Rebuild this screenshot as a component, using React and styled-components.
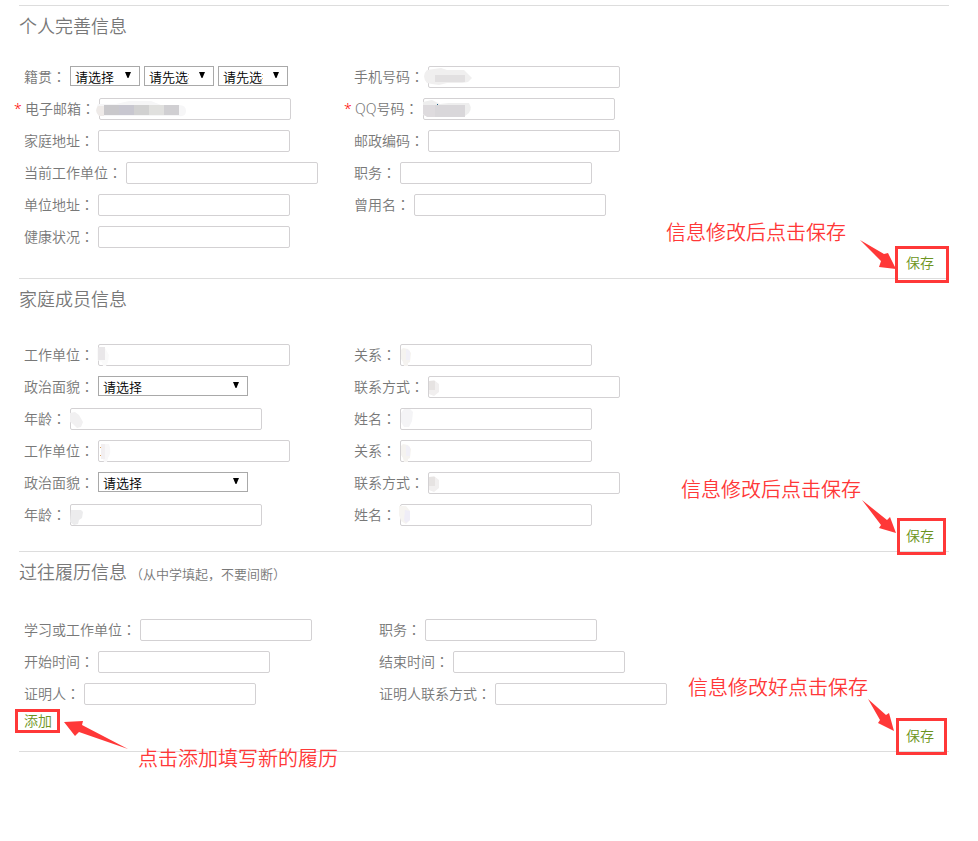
import React, { useId } from "react";
import styled, { createGlobalStyle } from "styled-components";

const GlobalStyle = createGlobalStyle`
  * { box-sizing: border-box; }
  body {
    margin: 0;
    background: #fff;
    color: #787878;
    font-family: "Noto Sans", "Noto Sans CJK SC", sans-serif;
    font-size: 14px;
    font-weight: 350;
    line-height: 20px;
  }
`;

const Page = styled.main`
  padding: 5px 29px 89px 19px;
`;

const Section = styled.section`
  position: relative;
  border-top: 1px solid #ddd;
  &:last-child { border-bottom: 1px solid #ddd; }
`;

const Header = styled.header`
  display: flex;
  align-items: baseline;
  gap: 3px;
  height: ${(p) => p.$height}px;
  padding-top: 7px;
  white-space: nowrap;
`;

const Title = styled.h2`
  margin: 0;
  font-size: 18px;
  font-weight: 350;
  line-height: 26px;
`;

const Hint = styled.small`
  font-size: 13px;
`;

/* The traditional face centres full-width punctuation in its cell. */
const Punct = styled.span`
  font-family: "Noto Sans CJK TC", sans-serif;
`;

const Fields = styled.div`
  display: grid;
  grid-template-columns: ${(p) => p.$first}px minmax(0, 1fr);
  grid-auto-rows: 32px;
  padding-left: 5px;
`;

const FieldRow = styled.div`
  grid-column: ${(p) => p.$column};
  display: flex;
  align-items: center;
  gap: 4px;
`;

const Label = styled.label`
  padding-bottom: 2px;
  white-space: nowrap;
`;

const Star = styled.span`
  width: 7px;
  margin-left: -10px;
  color: #f00;
`;

const Control = styled.span`
  position: relative;
  display: flex;
`;

const TextInput = styled.input`
  width: ${(p) => p.$width}px;
  height: 22px;
  padding: 0 4px;
  border: 1px solid #d3d1d3;
  border-radius: 2px;
  background: #fff;
  font: inherit;
`;

const Picker = styled.select`
  appearance: none;
  width: ${(p) => p.$width}px;
  height: 20px;
  margin-bottom: 2px;
  padding: 2px 24px 0 4px;
  border: 1px solid #a9a9a9;
  border-radius: 0;
  background: #fff;
  color: #000;
  font: inherit;
  font-size: 13px;
  line-height: 17px;
`;

const Caret = styled.svg`
  position: absolute;
  top: 6px;
  right: 9px;
  width: 6px;
  height: 6px;
  pointer-events: none;
`;

const Blot = styled.svg`
  position: absolute;
  top: 0;
  left: -4px;
  width: 96px;
  height: 22px;
  pointer-events: none;
`;

const Footer = styled.footer`
  display: flex;
  justify-content: flex-end;
  margin-top: ${(p) => p.$lift ? "-5px" : "0"};
  padding: 0 15px 5px 0;
`;

const AddRow = styled.div`
  display: flex;
  padding: 1px 0 0 5px;
`;

const TextButton = styled.button`
  padding: 0;
  border: 0;
  background: none;
  color: #6c9420;
  font: inherit;
  cursor: pointer;
`;

/* Callouts float over the form. */
const Frame = styled.span`
  position: absolute;
  z-index: 1;
  top: ${(p) => p.$top}px;
  ${(p) => p.$side}: ${(p) => p.$inset}px;
  width: ${(p) => p.$width}px;
  height: ${(p) => p.$height}px;
  border: 3px solid #ff3838;
  pointer-events: none;
`;

const Note = styled.span`
  position: absolute;
  z-index: 1;
  top: ${(p) => p.$top}px;
  ${(p) => p.$side}: ${(p) => p.$inset}px;
  color: #ff3838;
  font-size: 20px;
  line-height: 28px;
  white-space: nowrap;
  pointer-events: none;
`;

const Arrow = styled.svg`
  position: absolute;
  z-index: 1;
  top: ${(p) => p.$top}px;
  ${(p) => p.$side}: ${(p) => p.$inset}px;
  width: ${(p) => p.$width}px;
  height: ${(p) => p.$height}px;
  fill: #ff3838;
  pointer-events: none;
`;

const blots = {
  email: (
    <>
      <path d="M3 6h18L34 3h22l10 4h18q7 0 7 6t-7 5H4q-5-4-1-12" fill="#f6f6f7" />
      <path d="M3 8h6v10H4q-5-5-1-10" fill="#eeeae8" />
      <path d="M9 7h15v10H9z" fill="#c9c8cb" />
      <path d="M24 7h15v10H24z" fill="#c8c7d0" />
      <path d="M39 7h15v10H39z" fill="#d1d1d1" />
      <path d="M54 7h15v10H54z" fill="#e0e0de" />
      <path d="M69 7h15v10H69z" fill="#d0cfd2" />
    </>
  ),
  phone: (
    <>
      <path d="M3 4l14-2 6 2h17l4 4 4 4-4 4-6 1H23l-8 2-7-1-5-1q-6-7 0-13" fill="#f0efef" />
      <path d="M11 9h30v7H11z" fill="#e2e0e1" />
    </>
  ),
  qq: (
    <>
      <path d="M4 4l9-2 8 4 9-1h20q5 8-4 13H6l-2-1z" fill="#eeeeee" />
      <path d="M4 7h12v12H8l-4-3z" fill="#dedbde" />
      <path d="M16 7h30v12H16z" fill="#d9d7da" />
      <path d="M18 6h1v1h-1z" fill="#268" />
    </>
  ),
  unit: (
    <>
      <path d="M3 4h8l4 7-1 7-2 4H9l-1-4-5-2z" fill="#fafafa" />
      <path d="M5 3h6v13H4V4z" fill="#e9e7e9" />
    </>
  ),
  unit2: (
    <>
      <path d="M7 4h8q3 8-1 14l-1 4H10l-1-3-2-2z" fill="#f8f7f8" />
      <path d="M7 4h4v15H7z" fill="#f2eff1" />
      <path d="M6 7h1v1H6zM6 15h1v1H6z" fill="#dba365" />
    </>
  ),
  age: <path d="M4 5l5-1 4 3 4 7-2 5-4 1-4-4-3-2z" fill="#f1f0f1" />,
  age2: <path d="M5 6h10l2 2-1 6-3 2-1 4-4 1-4-3z" fill="#ececed" />,
  dot: (
    <>
      <path d="M7 4l5 1 3 4-1 9-2 1v3H8l-1-4-2-3V6z" fill="#f5f3f0" />
      <path d="M10 5l4 2v9h-4z" fill="#f1f0f7" />
    </>
  ),
  gray: (
    <>
      <path d="M5 5l5-1 5 4v8l-5 4-5-2z" fill="#f1efef" />
      <path d="M5 5h6v9H5z" fill="#e6e3e2" />
    </>
  ),
  pale: <path d="M8 1h6l3 3-1 9-3 6H8l-3-5V5z" fill="#f4f4f6" />,
  edge: (
    <>
      <path d="M3 2h7l4 5v9l-4 4-5-3-2-6z" fill="#f6f4f1" />
      <path d="M9 6l5 1v9l-4 3-2-3z" fill="#efedf7" />
    </>
  ),
};

const caption = (text) => (
  <>
    {text}
    <Punct>：</Punct>
  </>
);

function Field({ label, column, width, required, blot, options, pickers = 1 }) {
  const id = useId();
  return (
    <FieldRow $column={column}>
      {required && <Star aria-hidden="true">*</Star>}
      <Label htmlFor={id}>{caption(label)}</Label>
      {options ? (
        Array.from({ length: pickers }, (_, i) => (
          <Control key={i}>
            <Picker id={i ? `${id}-${i}` : id} aria-label={i ? `${label} ${i + 1}` : undefined} $width={width}>
              <option>{options[i]}</option>
            </Picker>
            <Caret viewBox="0 0 7 7" aria-hidden="true">
              <path d="M0 0h7L4 7H3z" />
            </Caret>
          </Control>
        ))
      ) : (
        <Control>
          <TextInput id={id} type="text" required={required} $width={width} />
          {blot && <Blot viewBox="0 0 96 22" aria-hidden="true">{blots[blot]}</Blot>}
        </Control>
      )}
    </FieldRow>
  );
}

function SaveCallout({ text, note, frame, arrow }) {
  return (
    <>
      <Note $side="right" $top={note[0]} $inset={note[1]}>{text}</Note>
      <Arrow
        $side="right" $top={arrow.top} $inset={arrow.right} $width={36} $height={33}
        viewBox="0 0 36 33" aria-hidden="true"
      >
        <path d={arrow.d} />
      </Arrow>
      <Frame $side="right" $top={frame[0]} $inset={frame[1]} $width={frame[2]} $height={37} />
    </>
  );
}

const choose = ["请选择"];

function FamilyMember({ blotSet }) {
  return (
    <>
      <Field column={1} label="工作单位" width={192} blot={blotSet[0]} />
      <Field column={2} label="关系" width={192} blot="dot" />
      <Field column={1} label="政治面貌" width={150} options={choose} />
      <Field column={2} label="联系方式" width={192} blot="gray" />
      <Field column={1} label="年龄" width={192} blot={blotSet[1]} />
      <Field column={2} label="姓名" width={192} blot={blotSet[2]} />
    </>
  );
}

export default function App() {
  return (
    <Page>
      <GlobalStyle />
      <Section>
        <Header $height={55}><Title>个人完善信息</Title></Header>
        <Fields $first={330}>
          <Field column={1} label="籍贯" width={70} options={["请选择", "请先选择", "请先选择"]} pickers={3} />
          <Field column={2} label="手机号码" width={192} blot="phone" />
          <Field column={1} label="电子邮箱" width={192} blot="email" required />
          <Field column={2} label="QQ号码" width={192} blot="qq" required />
          <Field column={1} label="家庭地址" width={192} />
          <Field column={2} label="邮政编码" width={192} />
          <Field column={1} label="当前工作单位" width={192} />
          <Field column={2} label="职务" width={192} />
          <Field column={1} label="单位地址" width={192} />
          <Field column={2} label="曾用名" width={192} />
          <Field column={1} label="健康状况" width={192} />
        </Fields>
        <Footer><TextButton type="button">保存</TextButton></Footer>
        <SaveCallout
          text="信息修改后点击保存"
          note={[213, 103]}
          frame={[240, 0, 54]}
          arrow={{ top: 234, right: 53, d: "M0 0l24 14 4-1 8 16-17-2 2-6z" }}
        />
      </Section>

      <Section>
        <Header $height={60}><Title>家庭成员信息</Title></Header>
        <Fields $first={330}>
          <FamilyMember blotSet={["unit", "age", "pale"]} />
          <FamilyMember blotSet={["unit2", "age2", "edge"]} />
        </Fields>
        <Footer $lift><TextButton type="button">保存</TextButton></Footer>
        <SaveCallout
          text="信息修改后点击保存"
          note={[197, 88]}
          frame={[239, 3, 49]}
          arrow={{ top: 221, right: 51, d: "M0 0l25 20 3-3 6 16-17-5 2-3z" }}
        />
      </Section>

      <Section>
        <Header $height={62}>
          <Title>过往履历信息</Title>
          <Hint>
            <Punct>（</Punct>从中学填起，不要间断<Punct>）</Punct>
          </Hint>
        </Header>
        <Fields $first={355}>
          <Field column={1} label="学习或工作单位" width={172} />
          <Field column={2} label="职务" width={172} />
          <Field column={1} label="开始时间" width={172} />
          <Field column={2} label="结束时间" width={172} />
          <Field column={1} label="证明人" width={172} />
          <Field column={2} label="证明人联系方式" width={172} />
        </Fields>
        <AddRow><TextButton type="button">添加</TextButton></AddRow>
        <Footer $lift><TextButton type="button">保存</TextButton></Footer>
        <SaveCallout
          text="信息修改好点击保存"
          note={[122, 81]}
          frame={[166, 2, 51]}
          arrow={{ top: 147, right: 45, d: "M0 0l18 16 3-2 5 18-16-8 2-3z" }}
        />
        <Frame $side="left" $top={157} $inset={-4} $width={45} $height={24} />
        <Arrow
          $side="left" $top={169} $inset={45} $width={64} $height={28}
          viewBox="0 0 64 28" aria-hidden="true"
        >
          <path d="M64 28L18 4l1-4L0 1l11 14 4-4z" />
        </Arrow>
        <Note $side="left" $top={193} $inset={119}>点击添加填写新的履历</Note>
      </Section>
    </Page>
  );
}
